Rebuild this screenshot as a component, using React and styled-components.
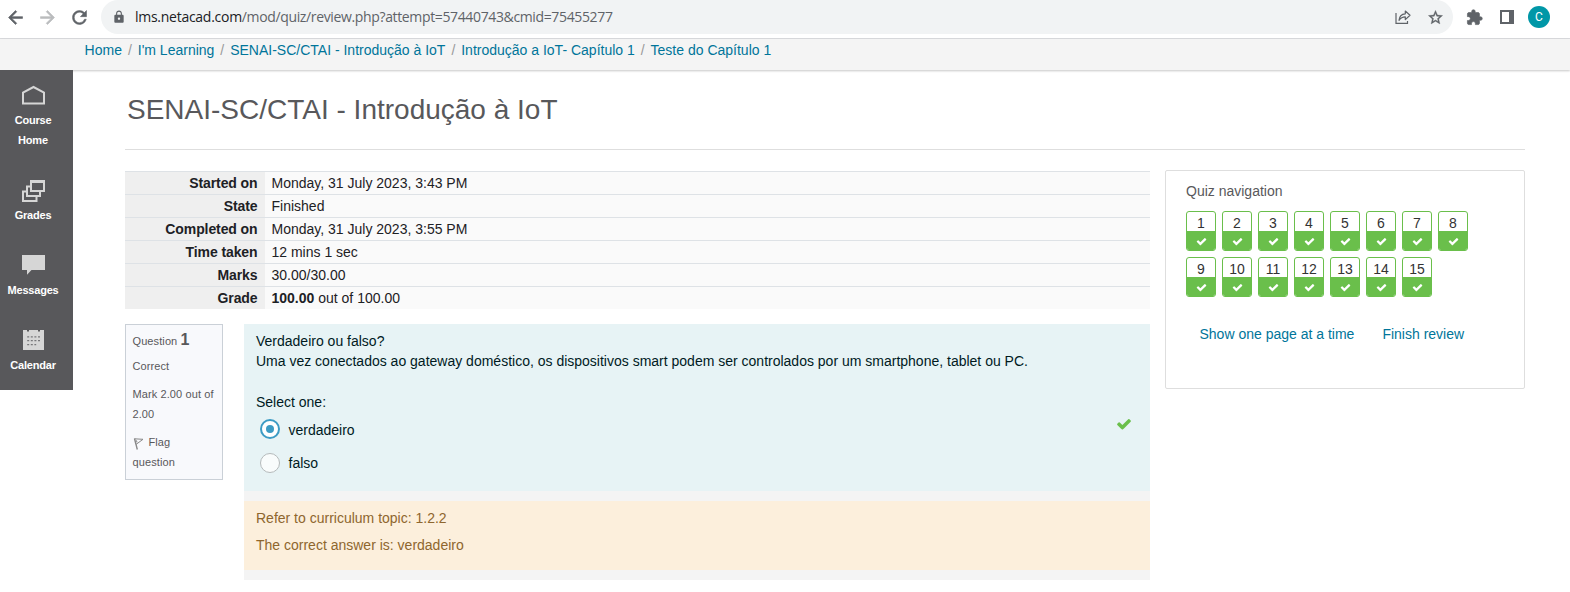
import React from "react";
import styled, { createGlobalStyle, css } from "styled-components";
import { MdArrowBack, MdArrowForward, MdRefresh, MdLock, MdStarBorder, MdExtension } from "react-icons/md";

const Global = createGlobalStyle`
  * { box-sizing: border-box; }
  body {
    margin: 0;
    background: #fff;
    color: #1d2125;
    font: 14px/20px "Liberation Sans", Arial, sans-serif;
    overflow: hidden;
  }
`;

const Page = styled.div`
  width: 1570px;
  height: 592px;
  display: flex;
  flex-direction: column;
  overflow: hidden;
`;

/* Browser toolbar */
const Toolbar = styled.header`
  height: 39px;
  flex: none;
  display: flex;
  align-items: flex-start;
  border-bottom: 1px solid #dadbde;
`;
const ToolButton = styled.span`
  width: ${(p) => p.$w}px;
  height: 34px;
  display: flex;
  align-items: center;
  justify-content: center;
  color: ${(p) => p.$color || "#5f6368"};
  svg {
    stroke-width: ${(p) => p.$stroke || 0};
  }
  path[fill="none"] {
    stroke: none;
  }
`;
const BackGroup = styled.div`
  display: flex;
  width: 101px;
  flex: none;
`;
const AddressBar = styled.div`
  width: 1352px;
  height: 34px;
  flex: none;
  display: flex;
  align-items: center;
  background: #f1f3f4;
  border-radius: 17px;
  padding: 0 2px 0 11px;
`;
const Url = styled.span`
  flex: 1;
  margin-left: 9px;
  font: 14px/20px "Open Sans", "Noto Sans", sans-serif;
  letter-spacing: -0.36px;
  white-space: nowrap;
  color: #5f6368;
  b {
    font-weight: 400;
    letter-spacing: -0.27px;
    color: #202124;
  }
`;
const Avatar = styled.span`
  width: 22px;
  height: 22px;
  margin: 6px 0 0 10px;
  border-radius: 50%;
  background: #0097a7;
  color: #fff;
  font: 12px/22px Roboto, sans-serif;
  text-align: center;
`;

/* Breadcrumbs */
const Breadcrumbs = styled.nav`
  height: 31px;
  flex: none;
  display: flex;
  padding: 1px 0 0 84.600px;
  background: #f4f4f4;
  box-shadow: 0 1px 2px rgba(0, 0, 0, 0.22);
  white-space: pre;
  position: relative;
  color: #999;
`;
const Link = styled.a`
  color: #00759a;
`;
const Slash = styled.span`
  width: 15.800px;
  text-align: center;
`;

/* Layout */
const Body = styled.div`
  display: flex;
  flex: 1;
`;
const Sidebar = styled.aside`
  width: 73px;
  height: 320px;
  flex: none;
  background: #58585b;
  position: relative;
`;
const SideItem = styled.div`
  padding-bottom: 15px;
  padding-right: 7px;
  text-align: center;
  font-size: 11px;
  font-weight: 700;
  letter-spacing: -0.2px;
  color: #fff;
`;
const SideIcon = styled.div`
  height: 40px;
  display: flex;
  justify-content: center;
  align-items: flex-start;
  padding: 14px 0 0 1px;
`;
const Main = styled.main`
  width: 1400px;
  margin-left: 52px;
`;
const Title = styled.h1`
  margin: 0 0 20px;
  height: 80px;
  padding: 22px 0 0 2px;
  border-bottom: 1px solid #dedede;
  font-size: 28px;
  line-height: 36px;
  font-weight: 400;
  color: #58585b;
`;
const Columns = styled.div`
  display: flex;
  justify-content: space-between;
  align-items: flex-start;
`;
const Review = styled.section`
  width: 1025px;
  padding-top: 1px;
`;

/* Attempt summary */
const Row = styled.div`
  display: flex;
  height: 23px;
  border-top: 1px solid #dee2e6;
  line-height: 23px;
`;
const RowHead = styled.div`
  width: 140px;
  padding-right: 7.500px;
  text-align: right;
  font-weight: 700;
  letter-spacing: -0.1px;
  background: #efefef;
`;
const RowCell = styled.div`
  flex: 1;
  padding-left: 6.500px;
  background: #fafafa;
`;

/* Question */
const Question = styled.div`
  display: flex;
  align-items: flex-start;
  justify-content: space-between;
  margin-top: 15px;
`;
const Info = styled.div`
  width: 98px;
  height: 156px;
  padding: 5px 6.500px;
  border: 1px solid #cad0d7;
  background: #f8f9fc;
  font-size: 11px;
  letter-spacing: 0.1px;
  color: #58585b;
`;
const InfoLine = styled.div`
  margin-bottom: ${(p) => p.$gap || 8}px;
  height: ${(p) => (p.$lines || 1) * 20}px;
  white-space: nowrap;
  b {
    font-size: 16px;
  }
  svg {
    vertical-align: -4px;
    margin-right: 4px;
  }
`;
const Content = styled.div`
  width: 906px;
  background: #f4f4f4;
  padding-bottom: 10px;
`;
const Formulation = styled.div`
  height: 167px;
  padding: 7px 12px 0;
  background: #e7f3f5;
  color: #001a1e;
  margin-bottom: 10px;
`;
const Prompt = styled.div`
  margin-bottom: 21px;
  white-space: nowrap;
`;
const Option = styled.label`
  display: flex;
  align-items: center;
  height: 34px;
  padding-left: 4px;
`;
const OptionText = styled.span`
  padding-top: ${(p) => (p.$low ? 2 : 0)}px;
`;
const Radio = styled.span`
  width: 20px;
  height: 20px;
  margin-right: 8.500px;
  border-radius: 50%;
  display: grid;
  place-items: center;
  background: #f9fcfc;
  border: 1px solid #b5babb;
  ${(p) =>
    p.$on &&
    css`
      background: #fff;
      border: 2px solid #3c9bc4;
      &::after {
        content: "";
        width: 8px;
        height: 8px;
        border-radius: 50%;
        background: #3c9bc4;
      }
    `}
`;
const Tick = styled.span`
  display: flex;
  margin: -11px 6px 0 auto;
`;
const Feedback = styled.div`
  height: 69px;
  padding: 7px 12px;
  background: #fcefdc;
  color: #8e662e;
  p {
    margin: 0 0 7px;
  }
`;

/* Quiz navigation */
const QuizNav = styled.aside`
  width: 360px;
  height: 219px;
  padding: 10px 20px;
  border: 1px solid #dedede;
  border-radius: 2px;
`;
const NavTitle = styled.h2`
  margin: 0 0 10px;
  font-size: 14px;
  line-height: 20px;
  font-weight: 400;
  color: #58585b;
`;
const NavGrid = styled.div`
  display: grid;
  grid-template-columns: repeat(8, 30px);
  gap: 6px;
`;
const NavButton = styled.div`
  height: 40px;
  border: 1px solid #6abf4b;
  border-radius: 3px;
  display: flex;
  flex-direction: column;
  text-align: center;
  line-height: 22px;
  color: #333;
  overflow: hidden;
  background: #fff;
`;
const NavNumber = styled.span`
  height: 19px;
`;
const NavMark = styled.span`
  flex: 1;
  display: flex;
  align-items: center;
  justify-content: center;
  padding-top: 1px;
  background: #6abf4b;
`;
const NavLinks = styled.div`
  display: flex;
  gap: 28px;
  padding: 27px 0 0 13.500px;
  white-space: nowrap;
`;

const CheckIcon = ({ size, color }) => (
  <svg width={size} height={size} viewBox="0 0 1792 1792" fill={color}>
    <path d="M1671 566q0 40-28 68l-724 724-136 136q-28 28-68 28t-68-28l-136-136-362-362q-28-28-28-68t28-68l136-136q28-28 68-28t68 28l294 295 656-657q28-28 68-28t68 28l136 136q28 28 28 68z" />
  </svg>
);
const ShareIcon = () => (
  <svg width="16" height="16" viewBox="0 0 16 16" fill="none" stroke="#5f6368">
    <path d="M1 4v10.4h11.5V12" />
    <path d="M4 11.3C4.3 7.6 6.4 5.1 10.3 4.8V2L15 6.3l-4.7 4.3V7.8C7.6 7.8 5.6 8.900 4 11.300z" strokeLinejoin="round" />
  </svg>
);
const PanelIcon = () => (
  <svg width="14" height="14" viewBox="0 0 14 14">
    <path fill="#5f6368" fillRule="evenodd" d="M0 0h14v14H0zM2 2v10h7V2z" />
  </svg>
);
const HomeIcon = () => (
  <svg width="23" height="21" viewBox="0 0 23 21" fill="none" stroke="#d6d6d6" strokeWidth="2">
    <path d="M1 19.500V8.500L11.500 3 22 8.500v11z" />
  </svg>
);
const GradesIcon = () => (
  <svg width="23" height="23" viewBox="0 0 23 23" fill="none" stroke="#d6d6d6" strokeWidth="2">
    <path d="M9 2.500H22V12H9z" />
    <path d="M8 2.500H23" strokeWidth="3" />
    <path d="M8.500 7.500H5v9.500h13v-4.500M4.500 12.500H1V22h13.500V17.500" />
  </svg>
);
const MessageIcon = () => (
  <svg width="23" height="21" viewBox="0 0 23 21" fill="#d6d6d6">
    <path d="M0 1h23v15H9.500L5 20.800V16H0z" />
  </svg>
);
const CalendarIcon = () => (
  <svg width="21" height="22" viewBox="0 0 21 22">
    <path fill="#d6d6d6" d="M0 1h4v1.500h2V1h9v1.500h2V1h4v20H0z" />
    <g fill="none" stroke="#77777a" strokeWidth="1.300" strokeDasharray="2 1.600">
      <path d="M4.200 7.800h13M4.200 11.600h13M4.200 15.600h9" />
    </g>
  </svg>
);
const FlagIcon = () => (
  <svg width="12" height="14" viewBox="0 0 12 14" fill="none" stroke="#888" strokeWidth="1">
    <path d="M1.500 2.500L4.300 13.500" strokeWidth="1.400" />
    <path d="M1.500 2.800L10 3.300 3.200 8.300M3.300 4.300L4 6.300" />
  </svg>
);

const crumbs = ["Home", "I'm Learning", "SENAI-SC/CTAI - Introdução à IoT", "Introdução a IoT- Capítulo 1", "Teste do Capítulo 1"];
const side = [
  [HomeIcon, ["Course", "Home"]],
  [GradesIcon, ["Grades"]],
  [MessageIcon, ["Messages"]],
  [CalendarIcon, ["Calendar"]],
];
const summary = [
  ["Started on", "Monday, 31 July 2023, 3:43 PM"],
  ["State", "Finished"],
  ["Completed on", "Monday, 31 July 2023, 3:55 PM"],
  ["Time taken", "12 mins 1 sec"],
  ["Marks", "30.00/30.00"],
  ["Grade", <><b>100.00</b> out of 100.00</>],
];

export default function App() {
  return (
    <Page>
      <Global />
      <Toolbar>
        <BackGroup>
          <ToolButton $w={30} $stroke={0.7}><MdArrowBack size={21} /></ToolButton>
          <ToolButton $w={34} $stroke={0.7} $color="#babcbe"><MdArrowForward size={21} /></ToolButton>
          <ToolButton $w={30} $stroke={0.6}><MdRefresh size={21} /></ToolButton>
        </BackGroup>
        <AddressBar>
          <MdLock size={14} color="#5f6368" />
          <Url><b>lms.netacad.com</b>/mod/quiz/review.php?attempt=57440743&amp;cmid=75455277</Url>
          <ToolButton $w={32} $stroke={1.2}><ShareIcon /></ToolButton>
          <ToolButton $w={32} $stroke={0.5}><MdStarBorder size={17} /></ToolButton>
        </AddressBar>
        <ToolButton $w={43} $stroke={0.9}><MdExtension size={17} /></ToolButton>
        <ToolButton $w={22}><PanelIcon /></ToolButton>
        <Avatar>C</Avatar>
      </Toolbar>
      <Breadcrumbs>
        {crumbs.map((c, i) => (
          <React.Fragment key={c}>
            {i > 0 && <Slash>/</Slash>}
            <Link>{c}</Link>
          </React.Fragment>
        ))}
      </Breadcrumbs>
      <Body>
        <Sidebar>
          {side.map(([Icon, lines]) => (
            <SideItem key={lines[0]}>
              <SideIcon><Icon /></SideIcon>
              {lines.map((l) => <div key={l}>{l}</div>)}
            </SideItem>
          ))}
        </Sidebar>
        <Main>
          <Title>SENAI-SC/CTAI - Introdução à IoT</Title>
          <Columns>
            <Review>
              {summary.map(([k, v]) => (
                <Row key={k}>
                  <RowHead>{k}</RowHead>
                  <RowCell>{v}</RowCell>
                </Row>
              ))}
              <Question>
                <Info>
                  <InfoLine $gap={6}>Question <b>1</b></InfoLine>
                  <InfoLine>Correct</InfoLine>
                  <InfoLine $lines={2}>Mark 2.00 out of<br />2.00</InfoLine>
                  <InfoLine $lines={2}><FlagIcon />Flag<br />question</InfoLine>
                </Info>
                <Content>
                  <Formulation>
                    <Prompt>
                      Verdadeiro ou falso?<br />
                      Uma vez conectados ao gateway doméstico, os dispositivos smart podem ser controlados por um smartphone, tablet ou PC.
                    </Prompt>
                    <div>Select one:</div>
                    <Option>
                      <Radio $on /><OptionText $low>verdadeiro</OptionText>
                      <Tick><CheckIcon size={16} color="#6abf4b" /></Tick>
                    </Option>
                    <Option><Radio /><OptionText>falso</OptionText></Option>
                  </Formulation>
                  <Feedback>
                    <p>Refer to curriculum topic: 1.2.2</p>
                    <p>The correct answer is: verdadeiro</p>
                  </Feedback>
                </Content>
              </Question>
            </Review>
            <QuizNav>
              <NavTitle>Quiz navigation</NavTitle>
              <NavGrid>
                {Array.from({ length: 15 }, (_, i) => (
                  <NavButton key={i}>
                    <NavNumber>{i + 1}</NavNumber>
                    <NavMark><CheckIcon size={11} color="#fff" /></NavMark>
                  </NavButton>
                ))}
              </NavGrid>
              <NavLinks>
                <Link>Show one page at a time</Link>
                <Link>Finish review</Link>
              </NavLinks>
            </QuizNav>
          </Columns>
        </Main>
      </Body>
    </Page>
  );
}
